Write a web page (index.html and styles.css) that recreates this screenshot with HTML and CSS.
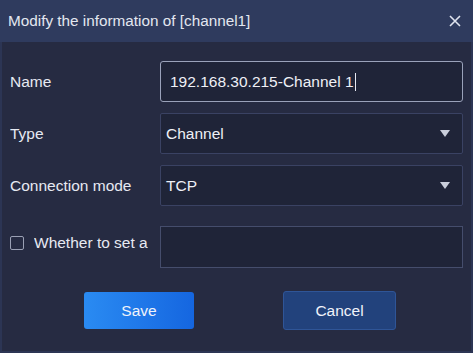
FILE: index.html
```html
<!doctype html>
<html>
    <head>
        <link rel="stylesheet" href="styles.css">
    </head>
    <body>
        <section class="dialog">
            <header class="dialog-head">
                <span class="dialog-title">Modify the information of [channel1]</span>
                <svg class="close" width="12" height="12" viewBox="0 0 12 12">
                    <path d="M1 1 L11 11 M11 1 L1 11" stroke="#dfe3ee" stroke-width="1.6" fill="none"/>
                </svg>
            </header>
            <div class="dialog-body">
                <div class="form">
                    <label class="label">Name</label>
                    <div class="field field-focus">192.168.30.215-Channel 1<span class="caret"></span></div>

                    <label class="label">Type</label>
                    <div class="field select">Channel<span class="arrow"></span></div>

                    <label class="label">Connection mode</label>
                    <div class="field select">TCP<span class="arrow"></span></div>

                    <label class="label check-label"><span class="checkbox"></span><span class="check-text">Whether to set a</span></label>
                    <div class="field field-plain"></div>
                </div>
                <div class="actions">
                    <button class="btn btn-save">Save</button>
                    <button class="btn btn-cancel">Cancel</button>
                </div>
            </div>
        </section>
    </body>
</html>
```
FILE: styles.css
```css
html,
body {
    margin: 0;
    overflow: hidden;
}
body {
    font-family: "Liberation Sans", Arial, sans-serif;
    font-size: 15.5px;
    color: #e6e9f2;
    background: #262b42;
}
.dialog {
    width: 473px;
    height: 353px;
    display: flex;
    flex-direction: column;
}
.dialog-head {
    height: 42px;
    padding: 0 12px 0 8px;
    display: flex;
    align-items: center;
    justify-content: space-between;
    background: #2f3b5e;
    flex-shrink: 0;
}
.dialog-title {
    color: #e3e7f0;
    font-size: 15.3px;
    margin-top: -1px;
}
.close {
    margin-top: -1px;
}
.dialog-body {
    flex: 1;
    background: #262b42;
    border: 2px solid #2c3554;
    border-top: none;
    padding: 19px 8px 0 8px;
}
.form {
    display: grid;
    grid-template-columns: 150px 303px;
    grid-template-rows: 41px 41px 41px 42px;
    row-gap: 11px;
}
.form .label:nth-of-type(4),
.form .field:nth-of-type(4) {
    margin-top: 9px;
}
.label {
    display: flex;
    align-items: center;
    color: #e6e9f2;
    white-space: nowrap;
    overflow: hidden;
}
.field {
    box-sizing: border-box;
    height: 41px;
    display: flex;
    align-items: center;
    background: #1f2438;
    border: 1px solid #3a4263;
    border-radius: 2px;
    padding: 0 5px;
    color: #eef0f6;
}
.field-focus {
    border-color: #9aa2ba;
    padding-left: 9px;
    border-radius: 3px;
}
.field-plain {
    height: 42px;
    border-color: #454d6c;
    border-radius: 0;
}
.caret {
    display: inline-block;
    width: 1px;
    height: 18px;
    background: #e6e9f2;
    margin-left: 1px;
}
.select {
    justify-content: space-between;
    padding-right: 12px;
}
.arrow {
    width: 0;
    height: 0;
    border-left: 5px solid transparent;
    border-right: 5px solid transparent;
    border-top: 7px solid #c9cedb;
}
.check-label {
    gap: 10px;
}
.checkbox {
    box-sizing: border-box;
    width: 14px;
    height: 14px;
    border: 1px solid #9aa0b4;
    border-radius: 2px;
    flex-shrink: 0;
}
.check-text {
    overflow: hidden;
}
.actions {
    display: flex;
    align-items: center;
    gap: 89px;
    padding-left: 74px;
    margin-top: 32px;
}
.btn {
    font-family: "Liberation Sans", Arial, sans-serif;
    font-size: 15.5px;
    color: #f0f3fa;
    border-radius: 3px;
    cursor: pointer;
}
.btn-save {
    width: 110px;
    height: 37px;
    border: none;
    background: linear-gradient(90deg, #2a8bf2, #1566e0);
}
.btn-cancel {
    width: 113px;
    height: 39px;
    border: 1px solid #2f5597;
    background: #22427c;
}
```
